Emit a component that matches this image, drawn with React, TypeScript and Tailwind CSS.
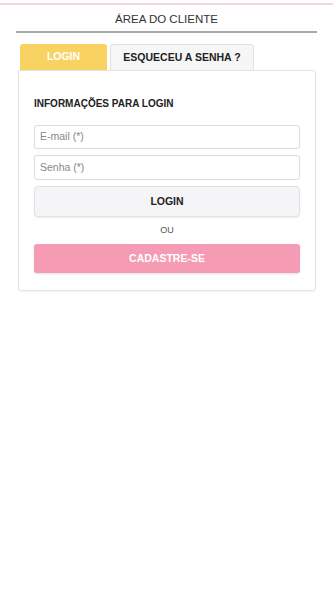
import React from 'react';

const App: React.FC = () => {
    return (
        <div className="min-h-[592px] bg-white text-[#222] [font-family:'Liberation_Sans',Arial,sans-serif]">
            <div className="pt-[3px]">
                <div className="h-[2px] bg-[#f8d3dc]" />
            </div>

            {/* Title */}
            <div className="mx-[16px] mt-[7px] border-b-[2px] border-[#a8a8a8] pb-[5px] text-center text-[11.5px] leading-[14px] text-[#333]">
                ÁREA DO CLIENTE
            </div>

            {/* Tabs */}
            <div className="mt-[11px] flex gap-[3px] pl-[20px]">
                <div className="flex h-[26px] w-[87px] items-center justify-center rounded-t-[3px] bg-[#f9d362] text-[10.5px] font-bold text-white">
                    LOGIN
                </div>
                <div className="flex h-[26px] w-[144px] items-center justify-center rounded-t-[3px] border border-b-0 border-[#e2e2e2] bg-[#f6f6f7] text-[10.5px] font-bold text-[#222]">
                    ESQUECEU A SENHA ?
                </div>
            </div>

            {/* Card */}
            <div className="mx-[18px] w-[298px] rounded-b-[3px] rounded-tr-[3px] border border-[#e4e4e4] px-[15px] pb-[17px] pt-[26px] shadow-[0_1px_2px_rgba(0,0,0,0.06)]">
                <h2 className="text-[10px] font-bold leading-[14px] text-[#222]">INFORMAÇÕES PARA LOGIN</h2>

                <div className="mt-[14px] flex flex-col gap-[6px]">
                    <div className="flex h-[24px] items-center rounded-[3px] border border-[#dcdcdc] px-[5px] text-[10.5px] text-[#888]">
                        E-mail (*)
                    </div>
                    <div className="flex h-[25px] items-center rounded-[3px] border border-[#dcdcdc] px-[5px] text-[10.5px] text-[#888]">
                        Senha (*)
                    </div>
                    <button className="flex h-[31px] items-center justify-center rounded-[4px] border border-[#e2e1e4] bg-[#f5f4f7] text-[10.5px] font-bold text-[#222] shadow-[0_1px_2px_rgba(0,0,0,0.08)]">
                        LOGIN
                    </button>
                </div>

                <div className="mt-[8px] text-center text-[9px] leading-[11px] text-[#555]">OU</div>

                <button className="mt-[8px] flex h-[29px] w-full items-center justify-center rounded-[3px] bg-[#f59bb4] text-[10.5px] font-bold text-white shadow-[0_1px_2px_rgba(0,0,0,0.12)]">
                    CADASTRE-SE
                </button>
            </div>
        </div>
    );
};

export default App;
